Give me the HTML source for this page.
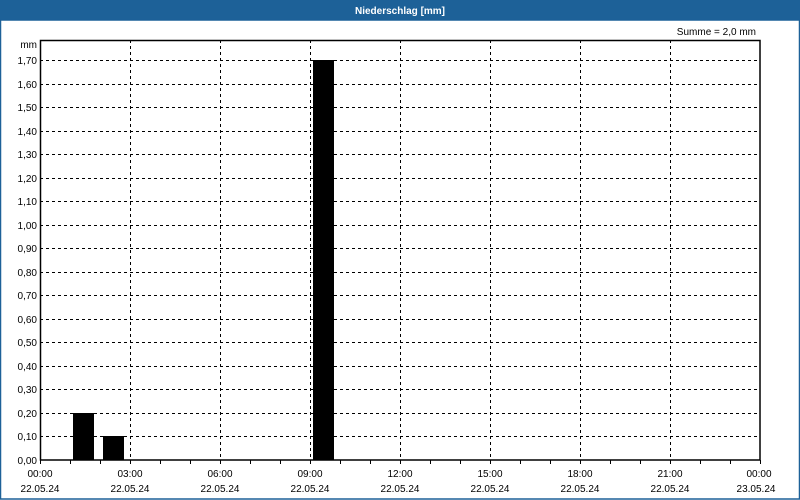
<!DOCTYPE html>
<html><head><meta charset="utf-8"><style>
html,body{margin:0;padding:0;background:#fff}
svg{display:block;font-family:"Liberation Sans",sans-serif}
</style></head><body>
<svg width="800" height="500" viewBox="0 0 800 500" xmlns="http://www.w3.org/2000/svg">
<rect x="0" y="0" width="800" height="500" fill="#fff"/>
<rect x="0" y="0" width="800" height="20" fill="#1d6198"/>
<rect x="0.5" y="20" width="799" height="479" fill="none" stroke="#1d6198" stroke-width="1.5"/>
<text x="400" y="14" fill="#fff" font-size="10" font-weight="bold" text-anchor="middle">Niederschlag [mm]</text>
<text x="756" y="35" font-size="10" text-anchor="end" fill="#000">Summe = 2,0 mm</text>
<text x="37" y="48" font-size="10" text-anchor="end" fill="#000">mm</text>
<g stroke="#000" stroke-width="1" stroke-dasharray="3,3" shape-rendering="crispEdges">
<line x1="130.5" y1="40" x2="130.5" y2="460"/><line x1="220.5" y1="40" x2="220.5" y2="460"/>
<line x1="310.5" y1="40" x2="310.5" y2="460"/><line x1="400.5" y1="40" x2="400.5" y2="460"/>
<line x1="490.5" y1="40" x2="490.5" y2="460"/><line x1="580.5" y1="40" x2="580.5" y2="460"/>
<line x1="670.5" y1="40" x2="670.5" y2="460"/>
</g>
<g id="h" stroke="#000" stroke-width="1" stroke-dasharray="3,3" shape-rendering="crispEdges"></g>
<g id="yl" font-size="10" text-anchor="end" fill="#000"></g>
<g fill="#000">
<rect x="73" y="413" width="21" height="47"/>
<rect x="103" y="436" width="21" height="24"/>
<rect x="313" y="60" width="21" height="400"/>
</g>
<rect x="40.5" y="40.5" width="719.5" height="419.5" fill="none" stroke="#000" stroke-width="1.5"/>
<g id="tk" stroke="#000" stroke-width="1" shape-rendering="crispEdges"></g>
<g font-size="10" text-anchor="middle" fill="#000">
<text x="40" y="477">00:00</text><text x="40" y="492">22.05.24</text>
<text x="130" y="477">03:00</text><text x="130" y="492">22.05.24</text>
<text x="220" y="477">06:00</text><text x="220" y="492">22.05.24</text>
<text x="310" y="477">09:00</text><text x="310" y="492">22.05.24</text>
<text x="400" y="477">12:00</text><text x="400" y="492">22.05.24</text>
<text x="490" y="477">15:00</text><text x="490" y="492">22.05.24</text>
<text x="580" y="477">18:00</text><text x="580" y="492">22.05.24</text>
<text x="670" y="477">21:00</text><text x="670" y="492">22.05.24</text>
<text x="759" y="477">00:00</text><text x="756" y="492">23.05.24</text>
</g>
<script>
var ns="http://www.w3.org/2000/svg",h=document.getElementById("h"),yl=document.getElementById("yl"),tk=document.getElementById("tk");
for(var k=0;k<=17;k++){var y=Math.round(460-k*400/17)+0.5;
if(k>0){var l=document.createElementNS(ns,"line");l.setAttribute("x1",40);l.setAttribute("x2",760);l.setAttribute("y1",y);l.setAttribute("y2",y);h.appendChild(l);}
var t=document.createElementNS(ns,"text");t.setAttribute("x",37);t.setAttribute("y",y+3.5);t.textContent=(k/10).toFixed(2).replace(".",",");yl.appendChild(t);}
for(var i=0;i<=24;i++){var x=40+i*30+0.5;var l=document.createElementNS(ns,"line");l.setAttribute("x1",x);l.setAttribute("x2",x);l.setAttribute("y1",460);l.setAttribute("y2",464);tk.appendChild(l);}
</script>
</svg>
</body></html>
